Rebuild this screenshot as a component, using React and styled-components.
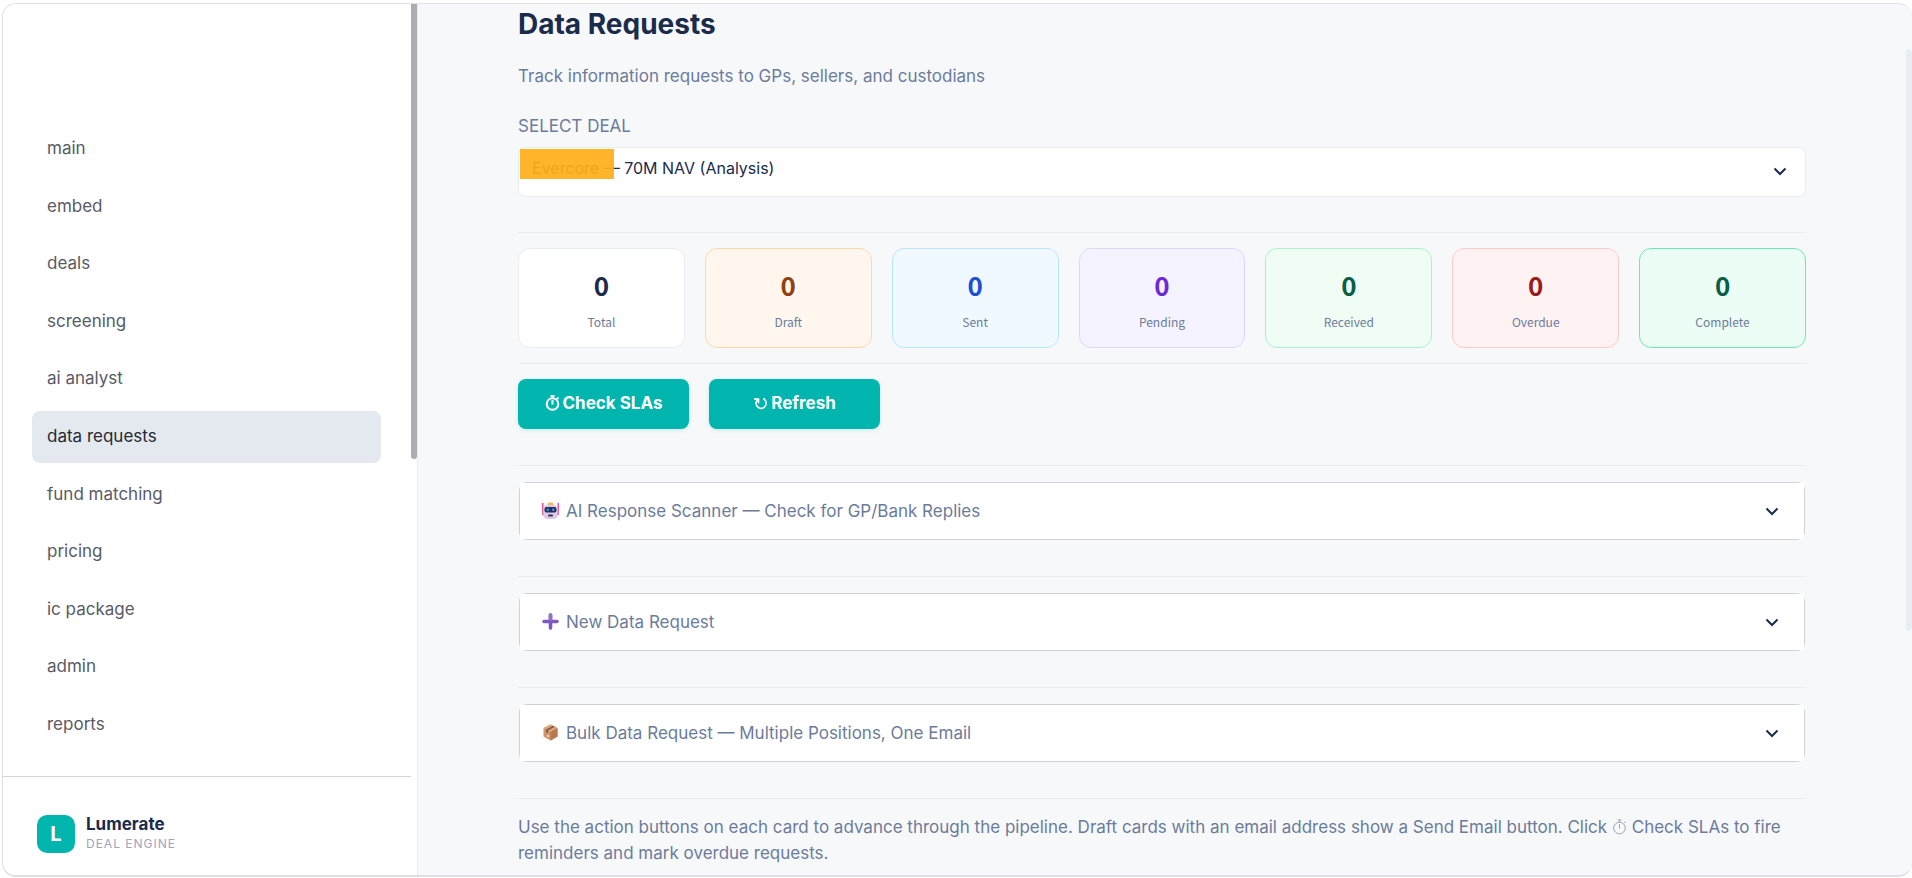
import React, { useState } from 'react';
import styled, { createGlobalStyle } from 'styled-components';

const navItems = [
    'main', 'embed', 'deals', 'screening', 'ai analyst', 'data requests',
    'fund matching', 'pricing', 'ic package', 'admin', 'reports',
];

const stats = [
    { label: 'Total', color: '#1a2b4c', bg: '#ffffff', border: '#e8edf3' },
    { label: 'Draft', color: '#92400e', bg: '#fff7ed', border: '#fed7aa' },
    { label: 'Sent', color: '#1d4ed8', bg: '#f0f9ff', border: '#bae6fd' },
    { label: 'Pending', color: '#6d28d9', bg: '#f5f3ff', border: '#ddd6fe' },
    { label: 'Received', color: '#065f46', bg: '#f0fdf4', border: '#a7f3d0' },
    { label: 'Overdue', color: '#991b1b', bg: '#fef2f2', border: '#fecaca' },
    { label: 'Complete', color: '#065f46', bg: '#ecfdf5', border: '#6ee7b7' },
];

const GlobalStyle = createGlobalStyle`
    * {
        box-sizing: border-box;
    }

    body {
        margin: 0;
        background: #ffffff;
        color: #6b7c9b;
        font-family: Inter, 'Liberation Sans', sans-serif;
        font-size: 17px;
    }

    button, select {
        font-family: inherit;
        font-size: inherit;
    }
`;

const Page = styled.div`
    height: 100vh;
    padding: 3px 0 1px 2px;
`;

const Frame = styled.div`
    display: flex;
    height: 100%;
    overflow: hidden;
    border: 2px solid #dfe0e2;
    border-width: 1px 0 2px 1px;
    border-radius: 14px;
    background: #f7f8fa;
`;

const Sidebar = styled.aside`
    display: flex;
    flex: none;
    width: 415px;
    border-right: 1px solid #e8ebf0;
    background: #ffffff;
`;

const SidebarBody = styled.div`
    display: flex;
    flex: 1;
    flex-direction: column;
`;

const Track = styled.div`
    flex: none;
    width: 6px;
    padding-top: ${props => props.$offset}px;
`;

const Thumb = styled.div`
    height: ${props => props.$size};
    border-radius: ${props => (props.$square ? '0 0 3px 3px' : '3px')};
    background: ${props => props.$color};
`;

const Nav = styled.nav`
    display: flex;
    flex: 1;
    flex-direction: column;
    justify-content: space-between;
    padding: 119px 30px 25px 29px;
`;

const NavLink = styled.a`
    padding: 0 15px 2px;
    border-radius: 8px;
    background: ${props => (props.$active ? '#e4e9f0' : 'transparent')};
    color: ${props => (props.$active ? '#262a33' : '#575b65')};
    line-height: 50px;
    text-decoration: none;
`;

const Brand = styled.div`
    display: flex;
    align-items: center;
    gap: 11px;
    height: 99px;
    padding: 15px 34px 0;
    border-top: 1px solid #d3d5d8;
`;

const BrandMark = styled.div`
    width: 38px;
    border-radius: 10px;
    background: #00b5ad;
    color: #ffffff;
    font-size: 20px;
    font-weight: 700;
    line-height: 38px;
    text-align: center;
`;

const BrandName = styled.div`
    color: #1a2b4c;
    font-weight: 700;
    line-height: 20px;
`;

const BrandTag = styled.div`
    color: #9ba6c0;
    font-size: 12px;
    letter-spacing: 1px;
    line-height: 20px;
`;

const Main = styled.main`
    flex: 1;
    padding: 0 100px;
`;

const Heading = styled.h1`
    margin: 0;
    color: #1a2b4c;
    font-size: 28px;
    font-weight: 700;
    line-height: 40px;
`;

const Subtitle = styled.p`
    margin: 20px 0 25px;
    line-height: 24px;
`;

const Label = styled.label`
    display: block;
    margin-bottom: 8px;
    line-height: 26px;
`;

const SelectWrap = styled.div`
    position: relative;
    margin-bottom: 35px;
`;

const Select = styled.select`
    display: block;
    width: 100%;
    height: 50px;
    padding: 0 13px 8px;
    border: 1px solid #e8edf3;
    border-radius: 8px;
    appearance: none;
    background: #ffffff;
    color: #1a2b4c;
    font-size: 16px;
`;

const Highlight = styled.span`
    position: absolute;
    top: 2px;
    left: 2px;
    width: 94px;
    height: 30px;
    background: rgba(255, 174, 24, 0.92);
    pointer-events: none;
`;

const SelectArrow = styled.span`
    position: absolute;
    top: 15px;
    right: 17px;
    height: 18px;
    pointer-events: none;
`;

const Rule = styled.hr`
    margin: 0 0 15px;
    border: 0;
    border-top: 1px solid #e8ebf0;
`;

const StatGrid = styled.div`
    display: grid;
    grid-template-columns: repeat(7, 1fr);
    gap: 20px;
    margin-bottom: 15px;
`;

const StatCard = styled.div`
    padding: 18px 0 15px;
    border: 1px solid ${props => props.$border};
    border-radius: 12px;
    background: ${props => props.$bg};
    font-family: 'Noto Sans CJK SC', 'Noto Sans', sans-serif;
    text-align: center;
`;

const StatValue = styled.div`
    color: ${props => props.$color};
    font-size: 26px;
    font-weight: 700;
    line-height: 36px;
`;

const StatLabel = styled.div`
    margin-top: 9px;
    font-size: 12px;
    line-height: 20px;
`;

const Actions = styled.div`
    display: flex;
    gap: 20px;
    margin-bottom: 36px;
`;

const ActionButton = styled.button`
    display: flex;
    align-items: center;
    justify-content: center;
    gap: 3px;
    width: 171px;
    height: 50px;
    padding: 0 0 2px;
    border: 0;
    border-radius: 8px;
    background: #00b5ad;
    box-shadow: 0 1px 4px rgba(0, 181, 173, 0.2);
    color: #ffffff;
    font-weight: 700;
`;

// the square summary sits over the rounded corners of its outline
const Expander = styled.div`
    margin: 16px 1px 36px;
    border: 1px solid #cfd3d8;
    border-radius: 8px;
`;

const ExpanderSummary = styled.button`
    display: flex;
    align-items: center;
    gap: 7px;
    width: 100%;
    height: 56px;
    padding: 0 23px 1px 22px;
    border: 0;
    background: #ffffff;
    color: #6b7c9b;
    text-align: left;
`;

const ExpanderTitle = styled.span`
    flex: 1;
`;

const Note = styled.p`
    margin: 0;
    line-height: 26px;
`;

const InlineIcon = styled.svg`
    vertical-align: -2px;
    color: ${props => props.$color};
`;

const Chevron = () => (
    <svg width="18" height="18" viewBox="0 0 18 18" fill="none" stroke="#1a2b4c" strokeWidth="2">
        <path d="M3.5 6.5 9 12l5.5-5.5" />
    </svg>
);

const Stopwatch = ({ weight = 1, color = '#9aa5b8' }) => (
    <InlineIcon
        $color={color}
        width="15"
        height="16"
        viewBox="0 0 15 16"
        fill="none"
        stroke="currentColor"
        strokeWidth={weight}
    >
        <circle cx="7.5" cy="9" r="5.8" />
        <path d="M7.5 9.5V5M7.5 3.5V1M5.5 1h4M12 4l1.500-1.500" />
    </InlineIcon>
);

const RefreshIcon = () => (
    <svg width="15" height="14" viewBox="0 0 15 14" fill="none" stroke="currentColor" strokeWidth="1.7">
        <path d="M10 3.2h2.2M11.6 3.7A5 5 0 1 1 4.5 3.9M1 3.2h4.5v4" />
    </svg>
);

const RobotIcon = () => (
    <svg width="17" height="17" viewBox="0 0 17 17">
        <rect x="0" y="1" width="1.5" height="12" fill="#f0518c" />
        <rect x="15.5" y="1" width="1.5" height="12" fill="#f0518c" />
        <rect x="5.5" y="0.5" width="6" height="4" rx="1.5" fill="#f6b84e" />
        <rect x="0.5" y="7" width="16" height="7" rx="2" fill="#d98bb8" />
        <rect x="1.5" y="3" width="14" height="14" rx="4" fill="#dccbe8" />
        <rect x="2.5" y="5" width="12" height="5.5" rx="2" fill="#27315c" />
        <circle cx="5.8" cy="7.7" r="1.3" fill="#2f9be0" />
        <circle cx="11.2" cy="7.7" r="1.3" fill="#2f9be0" />
        <rect x="6" y="12.5" width="5" height="2" rx="1" fill="#3b3354" />
    </svg>
);

const PlusIcon = () => (
    <svg width="17" height="17" viewBox="0 0 17 17">
        <path d="M8.5 2v13M2 8.5h13" stroke="#7e57c2" strokeWidth="3.6" strokeLinecap="round" />
        <path d="M8.5 2v4" stroke="#8f74c4" strokeWidth="3.6" strokeLinecap="round" />
    </svg>
);

const BoxIcon = () => (
    <svg width="17" height="17" viewBox="0 0 17 17">
        <path d="M8.5 0.5 15.5 4v8.5l-7 4-7-4V4z" fill="#cf966b" />
        <path d="M8.5 0.5 15.5 4l-7 4-7-4z" fill="#dba77c" />
        <path d="M8.5 8l7-4v8.5l-7 4z" fill="#b9784f" />
        <path d="M11 1.8 4 5.4v2.800l2 1V6.500l7-3.700z" fill="#8a5a48" />
        <rect x="5" y="11" width="2" height="2" fill="#f0d0c4" />
    </svg>
);

const sections = [
    { title: 'AI Response Scanner — Check for GP/Bank Replies', Icon: RobotIcon },
    { title: 'New Data Request', Icon: PlusIcon },
    { title: 'Bulk Data Request — Multiple Positions, One Email', Icon: BoxIcon },
];

export default function App() {
    const [page, setPage] = useState('data requests');

    return (
        <Page>
            <GlobalStyle />
            <Frame>
                <Sidebar>
                    <SidebarBody>
                        <Nav>
                            {navItems.map(item => (
                                <NavLink key={item} href="#" $active={item === page} onClick={() => setPage(item)}>
                                    {item}
                                </NavLink>
                            ))}
                        </Nav>
                        <Brand>
                            <BrandMark>L</BrandMark>
                            <div>
                                <BrandName>Lumerate</BrandName>
                                <BrandTag>DEAL ENGINE</BrandTag>
                            </div>
                        </Brand>
                    </SidebarBody>
                    <Track $offset={0}>
                        <Thumb $size="52.2%" $color="#adadb2" $square />
                    </Track>
                </Sidebar>
                <Main>
                    <Heading>Data Requests</Heading>
                    <Subtitle>Track information requests to GPs, sellers, and custodians</Subtitle>
                    <Label htmlFor="deal">SELECT DEAL</Label>
                    <SelectWrap>
                        <Select id="deal">
                            <option>Evercore — 70M NAV (Analysis)</option>
                        </Select>
                        <Highlight />
                        <SelectArrow><Chevron /></SelectArrow>
                    </SelectWrap>
                    <Rule />
                    <StatGrid>
                        {stats.map(({ label, color, bg, border }) => (
                            <StatCard key={label} $bg={bg} $border={border}>
                                <StatValue $color={color}>0</StatValue>
                                <StatLabel>{label}</StatLabel>
                            </StatCard>
                        ))}
                    </StatGrid>
                    <Rule />
                    <Actions>
                        <ActionButton><Stopwatch weight={2} color="#ffffff" />Check SLAs</ActionButton>
                        <ActionButton><RefreshIcon />Refresh</ActionButton>
                    </Actions>
                    {sections.map(({ title, Icon }) => (
                        <React.Fragment key={title}>
                            <Rule />
                            <Expander>
                                <ExpanderSummary>
                                    <Icon />
                                    <ExpanderTitle>{title}</ExpanderTitle>
                                    <Chevron />
                                </ExpanderSummary>
                            </Expander>
                        </React.Fragment>
                    ))}
                    <Rule />
                    <Note>
                        Use the action buttons on each card to advance through the pipeline. Draft cards with an
                        email address show a Send Email button. Click <Stopwatch /> Check SLAs to fire reminders
                        and mark overdue requests.
                    </Note>
                </Main>
                <Track $offset={45}>
                    <Thumb $size="70.5%" $color="#e8edf3" />
                </Track>
            </Frame>
        </Page>
    );
}
